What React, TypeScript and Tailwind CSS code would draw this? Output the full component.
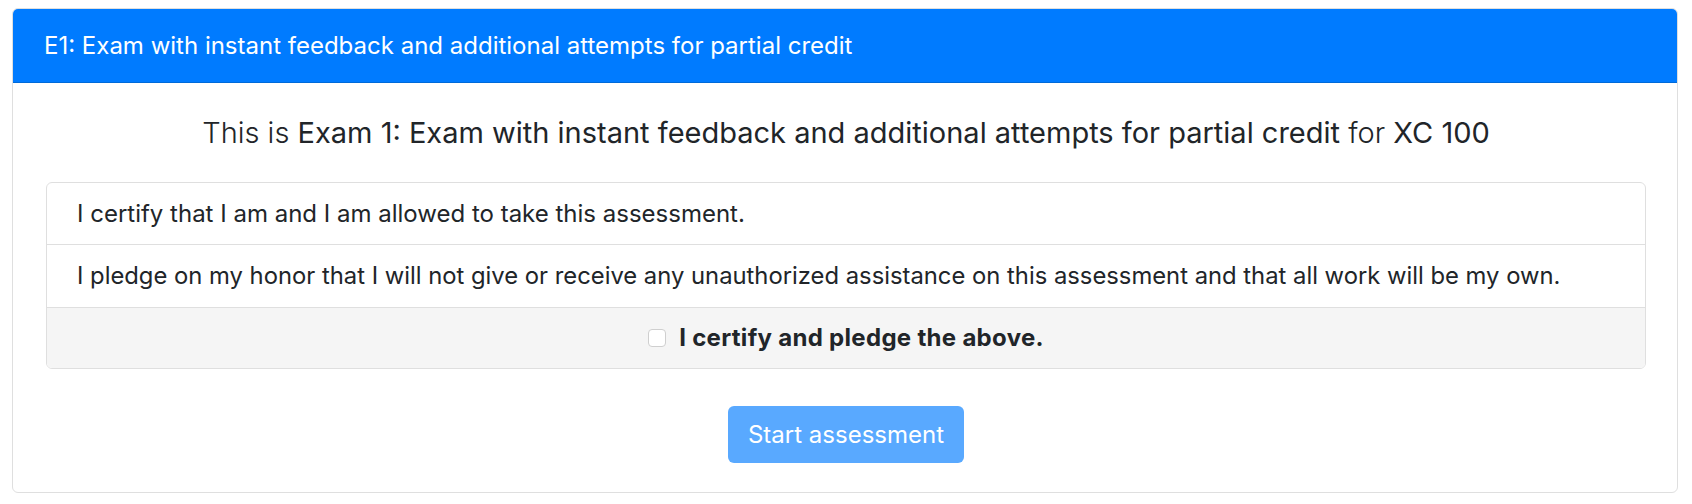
export default function App() {
  return (
    <div className="min-h-screen bg-white pl-[12px] pr-[14px] pt-[8px] font-['Inter',_'Liberation_Sans',_sans-serif] text-[#212529]">
      <div className="overflow-hidden rounded-[6px] border border-[#dfdfdf] bg-white">
        <div className="flex h-[74px] items-center border-b border-[#006ad9] bg-[#007bff] px-[31px] text-[24px] text-white">
          E1: Exam with instant feedback and additional attempts for partial credit
        </div>

        <div className="pb-[29px] pl-[33px] pr-[31px]">
          <p className="flex h-[99px] items-center justify-center text-[29px] font-light">
            <span>
              This is <span className="font-normal">Exam 1: Exam with instant feedback and additional attempts for partial credit</span> for{" "}
              <span className="font-normal">XC 100</span>
            </span>
          </p>

          <div className="overflow-hidden rounded-[6px] border border-[#dfdfdf]">
            <div className="flex h-[61px] items-center px-[30px] text-[24px]">
              I certify that I am and I am allowed to take this assessment.
            </div>
            <div className="flex h-[63px] items-center border-t border-[#dfdfdf] px-[30px] text-[23.8px]">
              I pledge on my honor that I will not give or receive any unauthorized assistance on this assessment and that all work will be my own.
            </div>
            <label className="flex h-[61px] items-center justify-center gap-[13px] border-t border-[#dfdfdf] bg-[#f5f5f5] text-[24px] font-bold tracking-[0.3px]">
              <input
                type="checkbox"
                className="h-[18px] w-[18px] appearance-none rounded-[4px] border border-[#cfcfcf] bg-white"
              />
              I certify and pledge the above.
            </label>
          </div>

          <div className="flex justify-center pt-[37px]">
            <button
              type="button"
              disabled
              className="h-[57px] w-[236px] rounded-[6px] bg-[#59a9ff] text-[24px] text-white"
            >
              Start assessment
            </button>
          </div>
        </div>
      </div>
    </div>
  );
}
